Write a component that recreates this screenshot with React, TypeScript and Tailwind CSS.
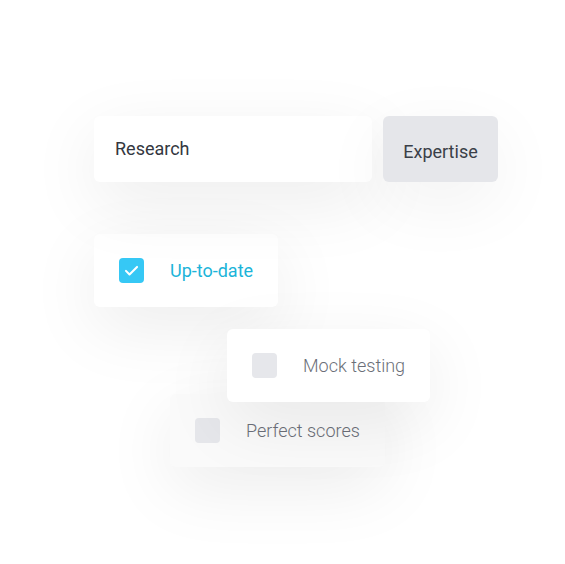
import React from "react";

function Box({ checked }: { checked?: boolean }) {
  if (checked) {
    return (
      <span className="flex h-[25px] w-[25px] shrink-0 items-center justify-center rounded-[4px] bg-[#36c8f5]">
        <svg viewBox="0 0 24 24" className="h-[19px] w-[19px]" fill="none" stroke="white" strokeWidth={2.6} strokeLinecap="round" strokeLinejoin="round">
          <path d="M5 12.5l4.5 4.5L19 7.5" />
        </svg>
      </span>
    );
  }
  return <span className="h-[25px] w-[25px] shrink-0 rounded-[4px] bg-[#e6e7eb]" />;
}

function Option({
  label,
  checked,
  className,
  textClass,
}: {
  label: string;
  checked?: boolean;
  className: string;
  textClass: string;
}) {
  return (
    <div className={`flex h-[73px] items-center gap-[26px] rounded-md pl-[25px] shadow-[0_20px_70px_rgba(0,0,0,0.08)] ${className}`}>
      <Box checked={checked} />
      <span className={`text-[18px] ${textClass}`}>{label}</span>
    </div>
  );
}

export default function App() {
  return (
    <div className="min-h-[564px] w-[565px] bg-white pt-[116px] pl-[94px] font-['Roboto',sans-serif]">
      <div className="flex gap-[11px]">
        <div className="flex h-[66px] w-[278px] items-center rounded-md bg-white pb-[2px] pl-[21px] text-[18px] text-[#333740] shadow-[0_20px_70px_rgba(0,0,0,0.08)]">
          Research
        </div>
        <div className="flex h-[66px] w-[115px] items-center justify-center rounded-md bg-[#e5e6ea] pt-[5px] text-[18px] text-[#3a3f48] shadow-[0_20px_70px_rgba(0,0,0,0.06)]">
          Expertise
        </div>
      </div>

      <Option
        label="Up-to-date"
        checked
        className="mt-[52px] w-[184px] bg-white"
        textClass="text-[#1bb4d9]"
      />

      <Option
        label="Mock testing"
        className="relative z-10 mt-[22px] ml-[133px] w-[203px] bg-white"
        textClass="font-light text-[#6b6f78]"
      />

      <Option
        label="Perfect scores"
        className="relative mt-[-8px] ml-[76px] w-[215px] bg-[#fafafa]"
        textClass="font-light text-[#6b6f78]"
      />
    </div>
  );
}
